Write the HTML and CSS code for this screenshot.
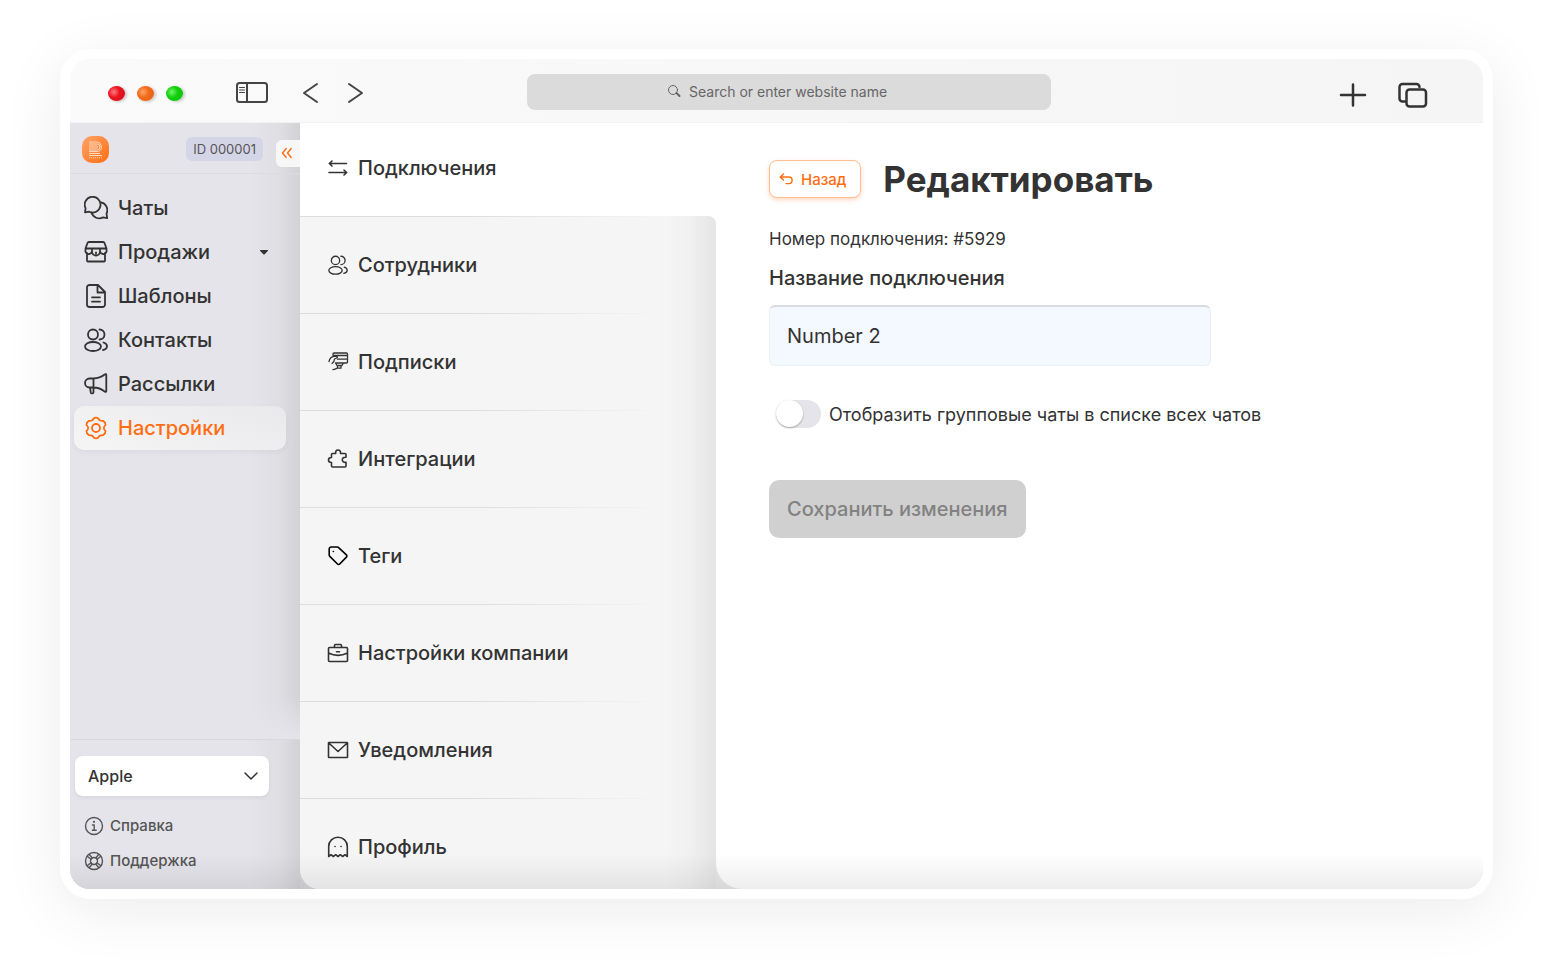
FILE: index.html
```html
<!DOCTYPE html>
<html lang="ru">
  <head>
    <meta charset="utf-8" />
    <meta name="viewport" content="width=device-width, initial-scale=1" />
    <title>Редактировать подключение</title>
    <link rel="stylesheet" href="styles.css">
  </head>
  <body>
    <svg class="sprite" aria-hidden="true">
      <symbol id="icon-users" viewBox="0 0 24 24">
        <circle cx="9" cy="6.500" r="5" />
        <ellipse cx="9" cy="18.500" rx="8" ry="4.500" />
        <path d="M15.500 1.500a5 5 0 0 1 0 10M19.500 14.500c2 .6 3.500 2 3.500 3.700s-1.500 3.200-4 3.800" />
      </symbol>
    </svg>

    <div class="window">
      <header class="toolbar">
        <div class="toolbar-left">
          <div class="lights">
            <span class="light red"></span>
            <span class="light orange"></span>
            <span class="light green"></span>
          </div>
          <button class="tool" type="button" aria-label="Sidebar">
            <svg width="34" height="24" viewBox="0 0 34 24"><rect x="2" y="2" width="30" height="19" rx="2.500" /><path d="M12 2v19" /><path class="thin" d="M4.500 6.500h5M4.500 9h5M4.500 11.500h5" /></svg>
          </button>
          <div class="arrows">
            <button class="tool" type="button" aria-label="Back">
              <svg width="17" height="24" viewBox="0 0 17 24"><path d="M15 3 2 12l13 9" /></svg>
            </button>
            <button class="tool" type="button" aria-label="Forward">
              <svg width="17" height="24" viewBox="0 0 17 24"><path d="m2 3 13 9-13 9" /></svg>
            </button>
          </div>
        </div>
        <div class="address">
          <svg width="14" height="14" viewBox="0 0 14 14"><circle cx="6" cy="6" r="4.500" /><path d="m9.500 9 3 3" stroke-width="2" /></svg>
          <input type="text" placeholder="Search or enter website name" aria-label="Address">
        </div>
        <div class="toolbar-right">
          <button class="tool bold" type="button" aria-label="New tab">
            <svg width="28" height="26" viewBox="0 0 28 26"><path d="M14 2.500v21M2 13h24" /></svg>
          </button>
          <button class="tool bold" type="button" aria-label="Tabs">
            <svg width="32" height="26" viewBox="0 0 32 26"><rect x="9.500" y="7.500" width="19.500" height="17" rx="3" /><path d="M8 19.500H5.500a3 3 0 0 1-3-3V5a3 3 0 0 1 3-3h14a3 3 0 0 1 3 3" /></svg>
          </button>
        </div>
      </header>

      <div class="app">
        <aside class="sidebar">
          <div class="sidebar-top">
            <div class="sidebar-head">
              <svg class="logo" viewBox="0 0 27 27">
                <defs>
                  <linearGradient id="logo-fill" x1="0" y1="0" x2="1" y2="1">
                    <stop offset="0" stop-color="#ffa468" />
                    <stop offset="1" stop-color="#ff6d12" />
                  </linearGradient>
                </defs>
                <rect width="27" height="27" rx="10" fill="url(#logo-fill)" stroke="none" />
                <path d="M7 6h8a5 5 0 0 1 1.500 9.500H7M7 8h8a3 3 0 0 1 0 6H7M7 10h7.500a1 1 0 0 1 0 2H7M7 17.500h11M7 19.500h13" />
                <path d="M7 21.800h13" stroke-dasharray="1 1" />
              </svg>
              <span class="account-id">ID 000001</span>
              <button class="collapse" type="button" aria-label="Свернуть меню">
                <svg width="12" height="12" viewBox="0 0 12 12"><path d="M5.200 1.500 1.500 6l3.700 4.500M10.200 1.500 6.500 6l3.700 4.500" /></svg>
              </button>
            </div>
            <nav class="menu">
              <a href="#">
                <svg class="icon" viewBox="0 0 24 24"><path d="M1 16.300l.6-4A7.900 7.900 0 1 1 5 15.700z" /><path d="M17 6.400a7.900 7.900 0 0 1 5.500 11.200l.7 4.500-4.200-.7A7.900 7.900 0 0 1 7.600 16.500" /></svg>
                Чаты
              </a>
              <a href="#">
                <svg class="icon" viewBox="0 0 24 24"><path d="M5 2h14a1.500 1.500 0 0 1 1.500 1L22.500 8.500h-21L3.500 3A1.500 1.500 0 0 1 5 2zM1.500 8.500V10a3.300 3.300 0 0 0 6.500 1.500 4 4 0 0 0 8 0A3.300 3.300 0 0 0 22.500 10V8.500M8 8.500v3M16 8.500v3M12 12.500v1M3 13v7.500a1 1 0 0 0 1 1h16a1 1 0 0 0 1-1V13" /></svg>
                Продажи
                <svg class="caret" width="8" height="5" viewBox="0 0 8 5"><path d="M.5 0h7a.5.5 0 0 1 .3.900L4.700 4.200a1 1 0 0 1-1.400 0L.2.900A.5.5 0 0 1 .5 0z" /></svg>
              </a>
              <a href="#">
                <svg class="icon" viewBox="0 0 24 24"><path d="M14 1H5.500A2.500 2.500 0 0 0 3 3.500v17A2.500 2.500 0 0 0 5.500 23h13a2.500 2.500 0 0 0 2.500-2.500V8zM13.500 1.500V8.500H20.500M8 13.300h8M8 17.700h8" /></svg>
                Шаблоны
              </a>
              <a href="#">
                <svg class="icon"><use href="#icon-users" /></svg>
                Контакты
              </a>
              <a href="#">
                <svg class="icon" viewBox="0 0 24 24"><path d="M9.500 6.500H5.500a4.500 4.500 0 0 0 0 9h4zM9.500 6.500c5 0 8-1.500 11.500-4.200.6-.5 1.300-.2 1.300.6v16.200c0 .8-.7 1.100-1.300.6-3.500-2.700-6.500-4.200-11.500-4.200M6 15.500l.8 5a1 1 0 0 0 1 .800h.700a1 1 0 0 0 1-1v-4.800" /></svg>
                Рассылки
              </a>
              <a class="active" href="#">
                <svg class="icon" viewBox="0 0 24 24"><path d="M9.600 2.400Q12 .8 14.400 2.400 14.800 5 19.100 4.900 21.700 6.400 21.500 9.100C19.300 10.800 19.300 13.200 21.500 14.900Q21.700 17.600 19.100 19.100 14.800 19 14.400 21.600 12 23.200 9.600 21.600 9.200 19 4.900 19.100 2.300 17.600 2.500 14.900C4.700 13.200 4.700 10.800 2.500 9.100Q2.300 6.400 4.900 4.900 9.200 5 9.600 2.400z" /><circle cx="12" cy="12" r="4" /></svg>
                Настройки
              </a>
            </nav>
          </div>
          <div class="sidebar-bottom">
            <div class="company">
              <select aria-label="Компания">
                <option>Apple</option>
              </select>
              <svg width="14" height="8" viewBox="0 0 14 8"><path d="m1 1 6 6 6-6" /></svg>
            </div>
            <a class="help" href="#">
              <svg viewBox="0 0 20 20"><circle cx="10" cy="10" r="8.500" /><path d="M8.500 9h1.700v5M8.300 14.200h3.900" /><circle class="dot" cx="10" cy="5.800" r="1.100" /></svg>
              Справка
            </a>
            <a class="help" href="#">
              <svg viewBox="0 0 20 20"><circle cx="10" cy="10" r="8.500" /><circle cx="10" cy="10" r="3.500" /><path d="m3.200 5.200 3.800 3M5.200 3.200l3 3.800M16.800 5.200l-3.800 3M14.800 3.200l-3 3.800M3.200 14.800l3.800-3M5.200 16.800l3-3.800M16.800 14.800l-3.800-3M14.800 16.800l-3-3.800" /></svg>
              Поддержка
            </a>
          </div>
        </aside>

        <div class="workspace">
          <nav class="settings">
            <a class="current" href="#">
              <svg class="icon" viewBox="0 0 20 20"><path d="M18.500 5.500H1.500M4 3 1.300 5.500 4 8M1 14.500h17.500M16 12l2.700 2.500L16 17" /></svg>
              Подключения
            </a>
            <a href="#">
              <svg class="icon"><use href="#icon-users" /></svg>
              Сотрудники
            </a>
            <a href="#">
              <svg class="icon fine" viewBox="0 0 20 20"><path d="M5 3.200V2a1 1 0 0 1 1-1h12.500a1 1 0 0 1 1 1v8a1 1 0 0 1-1 1H7.500M5.500 3.500h14M1 9.500c.7-3 2.500-5 5-5.200h2.500c1 0 1.200 1.300.2 1.700L6.500 7c0 2-.8 3.500-2.500 4.500M9.500 7.200H19M7.500 11l1.500 2.500h5l1.500-2.500M9.500 13.500v2.700h3.500v-2.700M9.500 16.200c-1.500.2-2.500 1.300-4.500 1.500" /></svg>
              Подписки
            </a>
            <a href="#">
              <svg class="icon" viewBox="0 0 20 20"><path d="M4.500 4.500h3.200c-.4-2 .5-3.500 2.300-3.500s2.900 1.500 2.500 3.500H17a1 1 0 0 1 1 1v2.800c-2.200-.3-3.700.7-3.700 2.500s1.500 2.800 3.700 2.500V17a1 1 0 0 1-1 1H4.500a1 1 0 0 1-1-1v-3.500C1.500 13.500.5 12.500.5 11s1-2.500 3-2.500v-3a1 1 0 0 1 1-1z" /></svg>
              Интеграции
            </a>
            <a href="#">
              <svg class="icon black" viewBox="0 0 20 20"><path d="M1.200 3a2 2 0 0 1 2-2h6a2 2 0 0 1 1.400.6l7.800 7.300a1.500 1.500 0 0 1 0 2.200l-6.700 6.900a1.500 1.500 0 0 1-2.200 0L1.800 10.400A2 2 0 0 1 1.200 9z" /><path d="M5.300 5.500h.1" /></svg>
              Теги
            </a>
            <a href="#">
              <svg class="icon" viewBox="0 0 20 20"><path d="M1.500 4.500h17a1 1 0 0 1 1 1v12a1 1 0 0 1-1 1h-17a1 1 0 0 1-1-1v-12a1 1 0 0 1 1-1zM6.500 4.500v-2a1 1 0 0 1 1-1h5a1 1 0 0 1 1 1v2M.5 10c6 3 13 3 19 0M8.500 8.800h3" /></svg>
              Настройки компании
            </a>
            <a href="#">
              <svg class="icon" viewBox="0 0 20 20"><path d="M1 2.500h18a.5.5 0 0 1 .5.5v14a.5.5 0 0 1-.5.5H1a.5.5 0 0 1-.5-.5V3a.5.5 0 0 1 .5-.5zM.8 3 10 11.500 19.200 3" /></svg>
              Уведомления
            </a>
            <a href="#">
              <svg class="icon" viewBox="0 0 20 20"><path d="M.7 19.500v-10a9.300 9.300 0 0 1 18.600 0v10l-2.300-1.800-2.300 1.800-2.400-1.800L10 19.500l-2.300-1.800-2.400 1.800L3 17.700z" /><path d="M7 9.500h.1M13 9.500h.1" /></svg>
              Профиль
            </a>
          </nav>

          <main class="content">
            <div class="title-row">
              <button class="back" type="button">
                <svg width="14" height="12" viewBox="0 0 14 12"><path d="M4.500 1 1.200 4l3.300 3M1.500 4h8.300a3.300 3.300 0 0 1 0 6.600H7" /></svg>
                Назад
              </button>
              <h1>Редактировать</h1>
            </div>
            <p class="number">Номер подключения: #5929</p>
            <label class="field-label" for="name">Название подключения</label>
            <input class="field" id="name" type="text" value="Number 2">
            <label class="switch">
              <input type="checkbox">
              Отобразить групповые чаты в списке всех чатов
            </label>
            <button class="save" type="submit" disabled>Сохранить изменения</button>
          </main>
        </div>
      </div>
    </div>
  </body>
</html>
```

FILE: styles.css
```css
:root {
  --text: #333333;
  --orange: #ff6d12;
  --lavender: #e5e4ea;
  --gray: #f5f5f5;
}

* {
  box-sizing: border-box;
}

body {
  margin: 0;
  padding: 49px 60px 71px;
  background: #ffffff;
  color: var(--text);
  font-family: Inter, "Liberation Sans", sans-serif;
}

a {
  color: inherit;
  text-decoration: none;
}

button,
input,
select {
  font: inherit;
  color: inherit;
}

button {
  cursor: pointer;
}

svg {
  flex: none;
  fill: none;
  stroke: currentColor;
  stroke-linecap: round;
  stroke-linejoin: round;
}

.sprite {
  position: absolute;
  width: 0;
  height: 0;
}

.window {
  padding: 10px;
  border-radius: 30px;
  background: #ffffff;
  box-shadow: 0 12px 60px rgba(0, 0, 0, 0.08);
}

/* browser toolbar */
.toolbar {
  display: grid;
  grid-template-columns: 457px minmax(200px, 524px) 1fr;
  align-items: center;
  height: 64px;
  padding-top: 3px;
  border-radius: 20px 20px 0 0;
  background: linear-gradient(90deg, #fafafa, #f5f5f5);
  border-bottom: 1px solid #f1f1f1;
}

.toolbar-left {
  display: flex;
  align-items: center;
  padding: 2px 0 0 38px;
}

.lights {
  display: flex;
  gap: 12px;
  margin-right: 52px;
}

.light {
  width: 17px;
  height: 15px;
  border-radius: 50%;
  box-shadow: 2px 1px 3px rgba(0, 0, 0, 0.2);
}

.red {
  background: radial-gradient(circle at 35% 40%, #ff7a80, #ea1420 40%, #d80a18);
}

.orange {
  background: radial-gradient(circle at 35% 40%, #ffa468, #f26a1b 40%, #e35d10);
}

.green {
  background: radial-gradient(circle at 35% 40%, #74f56c, #12cf0c 40%, #0abf06);
}

.tool {
  display: flex;
  padding: 0;
  border: 0;
  background: none;
  color: #444444;
}

.tool svg {
  stroke-width: 2;
}

.tool .thin {
  stroke-width: 1;
}

.tool.bold {
  color: #333333;
}

.tool.bold svg {
  stroke-width: 2.5;
}

.arrows {
  display: flex;
  gap: 28px;
  margin-left: 33px;
}

.address {
  display: flex;
  align-items: center;
  justify-content: center;
  gap: 8px;
  height: 36px;
  padding-bottom: 2px;
  border-radius: 8px;
  background: #dbdbdb;
  color: #666666;
}

.address input {
  width: 222px;
  padding: 0;
  border: 0;
  outline: 0;
  background: none;
  font-size: 14px;
}

.address input::placeholder {
  color: #666666;
  opacity: 1;
}

.toolbar-right {
  display: flex;
  justify-content: flex-end;
  gap: 30px;
  padding: 6px 54px 0 0;
}

/* layout */
.app {
  position: relative;
  display: flex;
  overflow: hidden;
  border-radius: 0 0 20px 20px;
  background: #d6d6da;
}

.app::after {
  content: "";
  position: absolute;
  left: 0;
  right: 0;
  bottom: 0;
  height: 36px;
  background: linear-gradient(rgba(0, 0, 0, 0), rgba(0, 0, 0, 0.07));
  pointer-events: none;
}

.workspace {
  display: flex;
  flex: 1;
  min-width: 0;
  border-bottom-left-radius: 20px;
  overflow: hidden;
  background: #e8e8e8;
}

/* sidebar */
.sidebar {
  display: flex;
  flex: none;
  flex-direction: column;
  width: 230px;
  background: var(--lavender);
}

.sidebar-top {
  flex: 1;
  overflow: hidden;
  border-bottom: 1px solid #d8d8dd;
  background:
    linear-gradient(rgba(229, 228, 234, 0), var(--lavender)) bottom / 100% 44px no-repeat,
    linear-gradient(90deg, var(--lavender) 78%, #dfdee3 91%, #d1d1d6);
}

.sidebar-head {
  display: flex;
  align-items: center;
  height: 51px;
  padding: 2px 0 0 12px;
  border-bottom: 1px solid #dbdbe0;
}

.logo {
  width: 27px;
  height: 27px;
  stroke: #ffd9bd;
  stroke-width: 1;
  stroke-linecap: butt;
}

.account-id {
  margin-left: auto;
  padding: 0 7px;
  border-radius: 6px;
  background: #d5d5e8;
  color: #555555;
  font-size: 13px;
  line-height: 24px;
}

.collapse {
  display: flex;
  align-items: center;
  width: 24px;
  height: 27px;
  margin: 8px 0 0 13px;
  padding: 0 5px;
  border: 0;
  border-radius: 6px 0 0 6px;
  background: #f7f7f8;
  color: var(--orange);
}

.collapse svg {
  stroke-width: 1.4;
}

.menu {
  display: flex;
  flex-direction: column;
  padding: 12px 14px 0 4px;
}

.menu a {
  display: flex;
  align-items: center;
  gap: 10px;
  height: 44px;
  padding: 0 10px;
  border-radius: 10px;
  font-size: 20px;
  font-weight: 500;
}

.menu .icon {
  width: 24px;
  height: 24px;
  stroke-width: 1.8;
}

.menu .caret {
  margin: 0 8px 0 auto;
  fill: currentColor;
  stroke: none;
}

.menu .active {
  background: linear-gradient(20deg, #f5f5f5, #e9e9ec);
  box-shadow: 0 2px 6px rgba(0, 0, 0, 0.05);
  color: var(--orange);
}

.sidebar-bottom {
  padding: 16px 31px 11px 5px;
  background: linear-gradient(90deg, var(--lavender) 78%, #dfdee3 91%, #d1d1d6);
}

.company {
  position: relative;
  margin-bottom: 12px;
}

.company select {
  width: 100%;
  height: 40px;
  padding: 0 13px;
  border: 0;
  border-radius: 8px;
  appearance: none;
  background: #ffffff;
  box-shadow: 0 2px 4px rgba(0, 0, 0, 0.06);
  font-size: 16px;
  font-weight: 500;
}

.company svg {
  position: absolute;
  top: 16px;
  right: 11px;
  stroke-width: 1.5;
  pointer-events: none;
}

.help {
  display: flex;
  align-items: center;
  gap: 6px;
  height: 35px;
  padding-left: 9px;
  color: #555555;
  font-size: 15px;
  font-weight: 500;
}

.help svg {
  width: 20px;
  height: 20px;
  stroke-width: 1.4;
}

.help .dot {
  fill: currentColor;
  stroke: none;
}

/* settings list */
.settings {
  flex: none;
  width: 416px;
  background: linear-gradient(#ffffff 100px, #e8e8e8 200px);
}

.settings a {
  display: flex;
  align-items: center;
  gap: 10px;
  height: 97px;
  padding-left: 28px;
  background:
    linear-gradient(90deg, #dddddd 40%, rgba(221, 221, 221, 0) 88%) top / 100% 1px no-repeat,
    linear-gradient(90deg, var(--gray) 88%, #f0f0f0 94%, #e5e5e5);
  font-size: 20px;
  font-weight: 500;
}

.settings .current {
  height: 93px;
  padding-bottom: 3px;
  background: #ffffff;
}

.settings .current + a {
  border-top-right-radius: 8px;
}

.settings a:last-child {
  height: 91px;
  padding-top: 7px;
}

.settings .icon {
  width: 20px;
  height: 20px;
  overflow: visible;
  stroke-width: 1.6;
}

.settings .fine {
  stroke-width: 1.3;
}

.settings .black {
  color: #000000;
}

/* content */
.content {
  display: flex;
  flex: 1;
  flex-direction: column;
  align-items: flex-start;
  min-width: 0;
  padding: 32px 53px;
  border-bottom-left-radius: 26px;
  background: #ffffff;
}

.title-row {
  display: flex;
  align-items: center;
  gap: 22px;
}

.back {
  display: flex;
  align-items: center;
  gap: 8px;
  height: 38px;
  padding: 0 14px 0 9px;
  border: 1px solid #ffbd91;
  border-radius: 8px;
  background: #ffffff;
  box-shadow: 0 2px 4px rgba(255, 109, 18, 0.25);
  color: var(--orange);
  font-size: 15px;
  font-weight: 500;
}

.back svg {
  stroke-width: 1.4;
}

h1 {
  margin: 0;
  font-size: 35px;
  line-height: 48px;
}

.number {
  margin: 24px 0 0;
  font-size: 17px;
  line-height: 24px;
}

.field-label {
  margin: 15px 0;
  font-size: 20px;
  font-weight: 500;
  line-height: 24px;
}

.field {
  width: 442px;
  max-width: 100%;
  height: 61px;
  padding: 0 17px;
  border: 1px solid #eaf0f6;
  border-top: 2px solid #d6dce2;
  border-radius: 6px;
  background: #f4f8ff;
  font-size: 20px;
}

.switch {
  display: flex;
  align-items: center;
  gap: 8px;
  margin: 34px 0 52px;
  padding-left: 7px;
  font-size: 18px;
}

.switch input {
  flex: none;
  width: 45px;
  height: 28px;
  margin: 0;
  border-radius: 14px;
  appearance: none;
  background: #e5e4ea;
}

.switch input::before {
  content: "";
  display: block;
  width: 27px;
  height: 27px;
  border-radius: 50%;
  background: #ffffff;
  box-shadow: 0 1px 2px rgba(0, 0, 0, 0.3);
}

.switch input:checked::before {
  margin-left: auto;
}

.save {
  height: 58px;
  padding: 0 18px;
  border: 0;
  border-radius: 10px;
  background: #d0d0d0;
  color: #828282;
  font-size: 20px;
  font-weight: 500;
}
```
